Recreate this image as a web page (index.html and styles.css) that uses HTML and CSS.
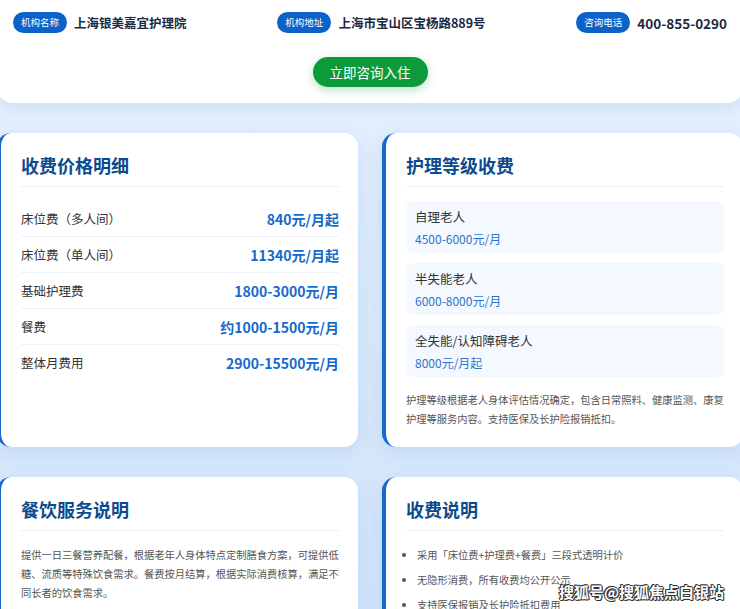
FILE: index.html
```html
<!DOCTYPE html>
<html lang="zh-CN">
<head>
  <meta charset="UTF-8">
  <title>上海银美嘉宜护理院 收费标准</title>
  <link rel="stylesheet" href="styles.css">
</head>
<body>
  <div class="page">
    <header class="top-card">
      <div class="info-row">
        <div class="info-item">
          <span class="tag">机构名称</span>
          <span class="info-text">上海银美嘉宜护理院</span>
        </div>
        <div class="info-item">
          <span class="tag">机构地址</span>
          <span class="info-text">上海市宝山区宝杨路889号</span>
        </div>
        <div class="info-item">
          <span class="tag">咨询电话</span>
          <span class="info-text phone">400-855-0290</span>
        </div>
      </div>
      <div class="cta-wrap">
        <button class="cta">立即咨询入住</button>
      </div>
    </header>

    <main class="grid">
      <section class="card">
        <h2>收费价格明细</h2>
        <div class="price-row"><span class="label">床位费（多人间）</span><span class="value">840元/月起</span></div>
        <div class="price-row"><span class="label">床位费（单人间）</span><span class="value">11340元/月起</span></div>
        <div class="price-row"><span class="label">基础护理费</span><span class="value">1800-3000元/月</span></div>
        <div class="price-row"><span class="label">餐费</span><span class="value">约1000-1500元/月</span></div>
        <div class="price-row"><span class="label">整体月费用</span><span class="value">2900-15500元/月</span></div>
      </section>

      <section class="card">
        <h2>护理等级收费</h2>
        <div class="level">
          <div class="level-name">自理老人</div>
          <div class="level-price">4500-6000元/月</div>
        </div>
        <div class="level">
          <div class="level-name">半失能老人</div>
          <div class="level-price">6000-8000元/月</div>
        </div>
        <div class="level">
          <div class="level-name">全失能/认知障碍老人</div>
          <div class="level-price">8000元/月起</div>
        </div>
        <p class="note">护理等级根据老人身体评估情况确定，包含日常照料、健康监测、康复护理等服务内容。支持医保及长护险报销抵扣。</p>
      </section>

      <section class="card">
        <h2>餐饮服务说明</h2>
        <p class="desc">提供一日三餐营养配餐，根据老年人身体特点定制膳食方案，可提供低糖、流质等特殊饮食需求。餐费按月结算，根据实际消费核算，满足不同长者的饮食需求。</p>
      </section>

      <section class="card">
        <h2>收费说明</h2>
        <ul class="rules">
          <li>采用「床位费+护理费+餐费」三段式透明计价</li>
          <li>无隐形消费，所有收费均公开公示</li>
          <li>支持医保报销及长护险抵扣费用</li>
        </ul>
      </section>
    </main>
  </div>

  <div class="watermark">搜狐号@搜狐焦点白银站</div>
</body>
</html>
```

FILE: styles.css
```css
html, body {
  margin: 0;
  padding: 0;
}
body {
  font-family: "Noto Sans CJK SC", "Noto Sans", sans-serif;
  background: linear-gradient(180deg, #e6f1fd 0%, #d9e9fb 60%, #d2e4fa 100%);
  min-height: 609px;
  overflow: hidden;
  color: #333;
}
.page {
  width: 746px;
  margin-left: -3px;
}
.top-card {
  background: #fff;
  border-radius: 0 0 16px 16px;
  box-shadow: 0 4px 14px rgba(40, 110, 200, 0.12);
  padding: 12px 16px 16px;
  margin-bottom: 30px;
}
.info-row {
  display: flex;
  justify-content: space-between;
  align-items: center;
  height: 21px;
}
.info-item {
  display: flex;
  align-items: center;
  gap: 7px;
}
.tag {
  background: #0b62c8;
  color: #fff;
  font-size: 9.5px;
  line-height: 21px;
  padding: 0 8px;
  border-radius: 11px;
}
.info-text {
  font-size: 12.5px;
  font-weight: 700;
  color: #1b2a44;
}
.phone {
  font-size: 13.5px;
}
.cta-wrap {
  display: flex;
  justify-content: center;
  margin-top: 24px;
}
.cta {
  background: #0d9a3a;
  color: #fff;
  border: none;
  font-family: inherit;
  font-size: 13.5px;
  height: 30px;
  padding: 0 17px;
  border-radius: 15px;
  box-shadow: 0 3px 10px rgba(13, 154, 58, 0.3);
  cursor: pointer;
}
.grid {
  display: grid;
  grid-template-columns: 1fr 1fr;
  column-gap: 24px;
  row-gap: 30px;
}
.card {
  background: #fff;
  border-left: 4px solid #1468d0;
  border-radius: 14px;
  box-shadow: 0 6px 20px rgba(40, 110, 200, 0.13);
  padding: 20px 19px 19px 20px;
}
.card h2 {
  margin: 0 0 14px;
  font-size: 18px;
  line-height: 25px;
  font-weight: 700;
  color: #0c4a8e;
  padding-bottom: 8px;
  border-bottom: 1px solid #e6f0fb;
}
.price-row {
  display: flex;
  justify-content: space-between;
  align-items: center;
  height: 35px;
  border-bottom: 1px solid #edf2f8;
}
.price-row:last-child {
  border-bottom: none;
}
.label {
  font-size: 12.5px;
  color: #333;
}
.value {
  font-size: 14px;
  font-weight: 700;
  color: #1669cc;
}
.level {
  background: #f4f9ff;
  border-radius: 7px;
  padding: 6px 9px 4px;
  height: 42px;
  margin-bottom: 10px;
}
.level-name {
  font-size: 12.5px;
  line-height: 20px;
  color: #333;
}
.level-price {
  font-size: 12px;
  line-height: 20px;
  margin-top: 2px;
  color: #2f74cc;
}
.note {
  margin: 13px 0 0;
  font-size: 10.25px;
  line-height: 19px;
  color: #555;
}
.desc {
  margin: 0;
  font-size: 10.25px;
  line-height: 19px;
  color: #555;
}
.rules {
  margin: 0;
  padding-left: 11px;
  font-size: 10.25px;
  line-height: 19px;
  color: #555;
}
.rules li {
  margin-bottom: 6px;
}
.watermark {
  position: absolute;
  right: 16px;
  bottom: 7px;
  font-size: 15px;
  font-weight: 700;
  color: #fff;
  text-shadow: 1px 0 0 #333, -1px 0 0 #333, 0 1px 0 #333, 0 -1px 0 #333, 1px 1px 0 #333, -1px -1px 0 #333;
}
```
